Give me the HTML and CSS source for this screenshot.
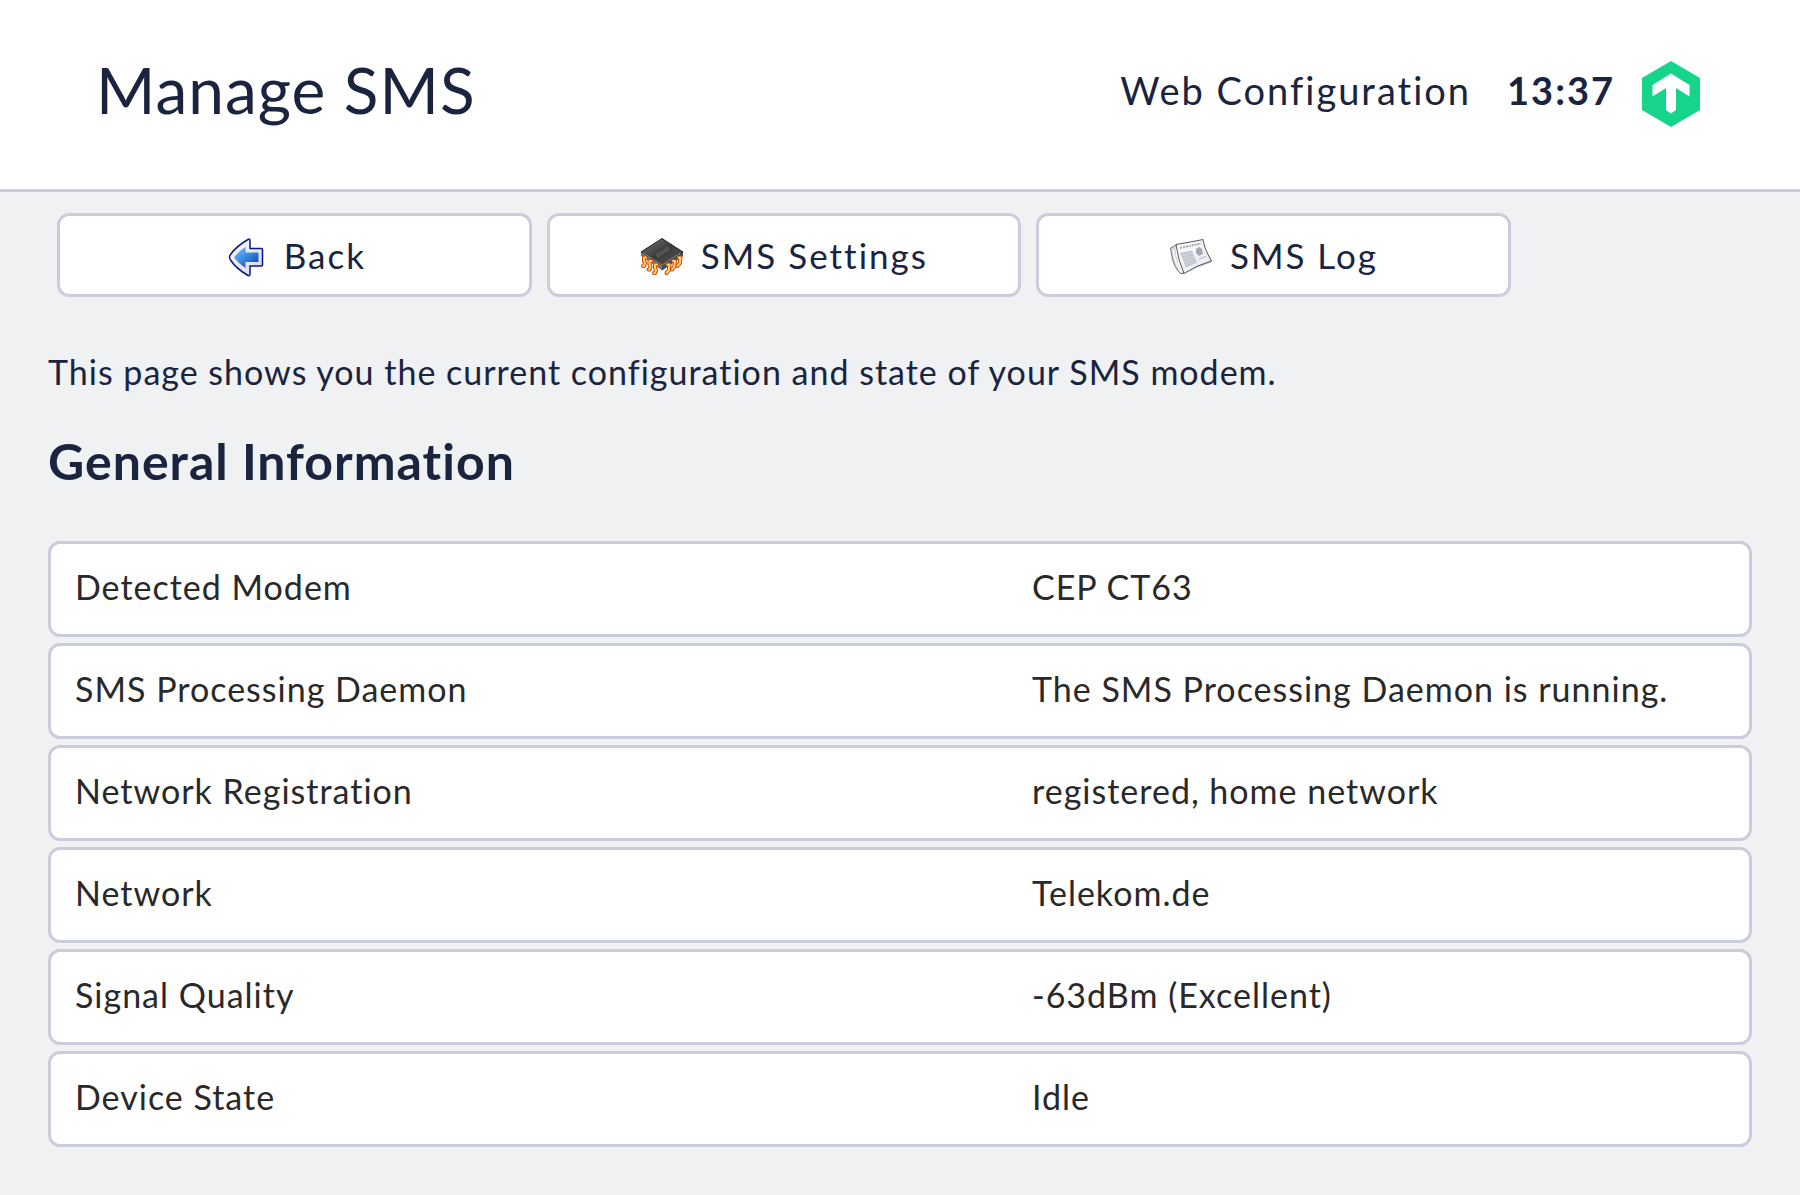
FILE: index.html
```html
<!DOCTYPE html>
<html lang="en">
<head>
<meta charset="utf-8">
<meta name="viewport" content="width=device-width, initial-scale=1">
<title>Manage SMS</title>
<link rel="stylesheet" href="styles.css">
</head>
<body>
<header class="topbar">
  <h1 class="title">Manage SMS</h1>
  <div class="status">
    <span>Web Configuration</span>
    <time class="clock">13:37</time>
    <svg class="logo" viewBox="0 0 58 66" role="img" aria-label="Home">
      <path fill="#16d58a" d="M29 0 58 17V49L29 66 0 49V17Z"/>
      <path fill="#fff" d="M29 12.500 47.500 24V35.500L34 27V49L29 52.500 24 49V27L10.500 35.500V24Z"/>
    </svg>
  </div>
</header>
<main class="content">
  <nav class="actions">
    <button type="button" class="action">
      <svg class="icon" viewBox="0 0 44 44" aria-hidden="true">
        <defs>
          <linearGradient id="arrow" x1="0" y1="0" x2="1" y2="1"><stop offset="0" stop-color="#6cc5ff"/><stop offset=".5" stop-color="#3a86e0"/><stop offset="1" stop-color="#063a9c"/></linearGradient>
          <linearGradient id="rim" x1="0" y1="0" x2="1" y2="1"><stop offset="0" stop-color="#fff"/><stop offset="1" stop-color="#d4d4e2"/></linearGradient>
        </defs>
        <path d="M25 4.500Q27 3 27 6V13.500H38.500Q39.500 13.500 39.500 14.500V30Q39.500 31 38.500 31H27V38.500Q27 41.500 25 40.500Q13 33.500 7.500 25Q5.500 22 7.500 19.500Q13 11.500 25 4.500Z" fill="url(#rim)" stroke="#0b1590" stroke-width="1.500"/>
        <path d="M22.500 12V17.500H35.500V27H22.500V33Q15 28 11 22.500Q15 16.500 22.500 12Z" fill="url(#arrow)"/>
      </svg>
      Back
    </button>
    <button type="button" class="action">
      <svg class="icon" viewBox="0 0 44 44" aria-hidden="true">
        <defs><linearGradient id="chip" x1="0" y1="0" x2="1" y2="1"><stop offset="0" stop-color="#777"/><stop offset=".5" stop-color="#3b3b3b"/><stop offset="1" stop-color="#555"/></linearGradient></defs>
        <path fill="#777" d="M1 17.500 22 31 43 17.500V21L22 35.500 1 21Z"/>
        <path fill="#333" d="M22 31 43 17.500V21L22 35.500Z" opacity=".7"/>
        <g fill="none" stroke-linejoin="round" stroke-linecap="round">
          <path stroke="#d0401c" stroke-width="4" d="M6 22.500H4V26L5 28 4 31H3M11.500 26H9.500V29.500L10.500 31.500 9.500 34.500H8.500M17 29.500H15V33L16 35 15 38H14M38.500 22.500H40.500L40 26V28L37.500 31M33 26H35L34.500 29.500V31.500L32 34.500M27.500 29.500H29.500L29 33V35L26.500 38"/>
          <path stroke="#ffd855" stroke-width="2" d="M6 22.500H4V26L5 28 4 31H3M11.500 26H9.500V29.500L10.500 31.500 9.500 34.500H8.500M17 29.500H15V33L16 35 15 38H14M38.500 22.500H40.500L40 26V28L37.500 31M33 26H35L34.500 29.500V31.500L32 34.500M27.500 29.500H29.500L29 33V35L26.500 38"/>
        </g>
        <path fill="url(#chip)" stroke="#222" d="M22 3.500 43 17 22 30.500 1 17Z"/>
        <path fill="none" stroke="#888" d="M3.500 18 22 30 40.500 18"/>
        <path fill="none" stroke="#606060" stroke-width="4" stroke-dasharray="2 1" d="M17 21 29 13"/>
      </svg>
      SMS Settings
    </button>
    <button type="button" class="action">
      <svg class="icon" viewBox="0 0 44 44" aria-hidden="true">
        <defs><linearGradient id="paper" x1="0" y1="0" x2="1" y2="1"><stop offset="0" stop-color="#fff"/><stop offset="1" stop-color="#e3e6ed"/></linearGradient></defs>
        <path fill="#aaaebb" d="M13 38.500 42 27.500 43 26 38 17 16 37Z" opacity=".7"/>
        <path fill="#cfd1d5" stroke="#777" d="M7 10 1.500 13 3.500 24Q6 34 11.500 38.500H15L14 12Z"/>
        <path fill="none" stroke="#fff" stroke-width="1.500" d="M4 14Q5.500 27 12 37M7 12.500Q8 27 14 37"/>
        <path fill="url(#paper)" stroke="#55565e" d="M7 9.500Q22 7 34 4.500Q35 13 42.500 26Q28 30 15 38.500Q9 25 7 9.500Z"/>
        <path fill="none" stroke="#aaa" stroke-width="2" stroke-dasharray="2 1" d="M11 13 32 8.500"/>
        <path fill="#c2c5d0" d="M11 18 23 15.500 28 27.500 17 32.500Z"/>
        <path fill="none" stroke="#d6d9e0" stroke-width="1" d="M12 21 24 18M13 24 25 21M14 27 26 23.500M15 30 27 26"/>
        <path fill="#a3a7ae" d="M27 14 30 12 33 14 34 19 30 21 27 18Z"/>
        <path fill="none" stroke="#c4c7ce" stroke-width="1.500" d="M30 24 37 21.500"/>
      </svg>
      SMS Log
    </button>
  </nav>
  <p class="intro">This page shows you the current configuration and state of your SMS modem.</p>
  <h2 class="heading">General Information</h2>
  <table class="info">
    <tbody>
      <tr><th scope="row">Detected Modem</th><td>CEP CT63</td></tr>
      <tr><th scope="row">SMS Processing Daemon</th><td>The SMS Processing Daemon is running.</td></tr>
      <tr><th scope="row">Network Registration</th><td>registered, home network</td></tr>
      <tr><th scope="row">Network</th><td>Telekom.de</td></tr>
      <tr><th scope="row">Signal Quality</th><td>-63dBm (Excellent)</td></tr>
      <tr><th scope="row">Device State</th><td>Idle</td></tr>
    </tbody>
  </table>
</main>
</body>
</html>
```
FILE: styles.css
```css
* {
  box-sizing: border-box;
}

body {
  margin: 0;
  background: #f0f1f3;
  color: #1a243f;
  font-family: Lato, sans-serif;
  font-size: 34px;
  line-height: 40px;
  letter-spacing: 1px;
}

.topbar {
  display: flex;
  justify-content: space-between;
  align-items: center;
  min-height: 192px;
  padding: 0 100px 10px 96px;
  background: #fff;
  border-bottom: 3px solid #cccddc;
}

.title {
  margin: 0;
  font-size: 64px;
  line-height: 76px;
  font-weight: 400;
}

.status {
  display: flex;
  align-items: center;
  font-size: 38px;
  letter-spacing: 2px;
}

.clock {
  margin: 0 27px 0 36px;
  font-weight: 700;
}

.logo {
  width: 58px;
  height: 66px;
  margin-top: 8px;
}

.content {
  padding: 21px 48px 48px;
}

.actions {
  display: flex;
  gap: 15px;
  padding: 0 0 0 9px;
}

.action {
  display: flex;
  flex: 0 0 28%;
  justify-content: center;
  align-items: center;
  gap: 17px;
  height: 84px;
  padding: 0;
  border: 3px solid #cccddc;
  border-radius: 12px;
  background: #fff;
  color: inherit;
  font: inherit;
  font-size: 35px;
  letter-spacing: 2px;
  cursor: pointer;
}

.icon {
  width: 44px;
  height: 44px;
  margin-top: 4px;
}

.intro {
  margin: 55px 0 0;
}

.heading {
  margin: 39px 0 50px;
  font-size: 50px;
  line-height: 60px;
  font-weight: 700;
}

.info,
.info tbody {
  display: grid;
  gap: 6px;
  color: #292929;
}

.info tr {
  display: grid;
  grid-template-columns: 58fr 42fr;
  align-items: center;
  min-height: 96px;
  padding: 0 24px 4px;
  border: 3px solid #cccddc;
  border-radius: 12px;
  background: #fff;
}

.info th,
.info td {
  padding: 0;
  font-weight: 400;
  text-align: left;
}
```
